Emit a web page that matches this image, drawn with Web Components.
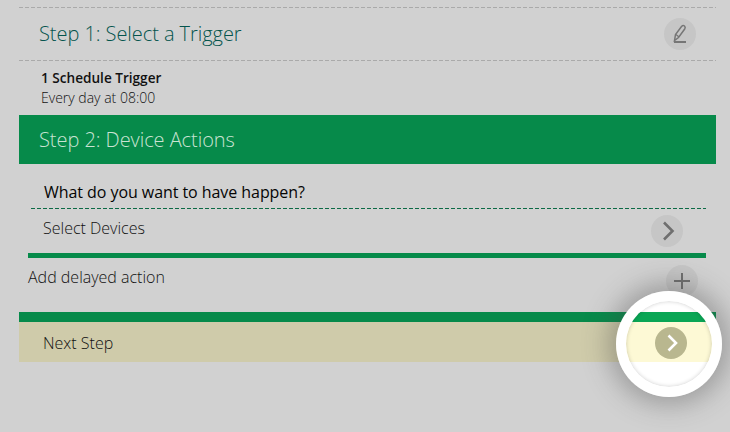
<!DOCTYPE html>
<html>
<head>
<meta charset="utf-8">
<style>
  html, body { margin: 0; height: 100%; background: #d1d1d1; overflow: hidden; }
  body { font-family: "Open Sans", "Liberation Sans", sans-serif; color: #1c1c1c; }
</style>
</head>
<body>
<wizard-page>
  <step-header dashed title-text="Step 1: Select a Trigger">
    <round-icon kind="pencil"></round-icon>
  </step-header>
  <trigger-summary name="1 Schedule Trigger" detail="Every day at 08:00"></trigger-summary>
  <step-header active title-text="Step 2: Device Actions"></step-header>
  <action-panel></action-panel>
  <next-step></next-step>
  <spot-light></spot-light>
</wizard-page>

<script>
const ICONS = {
  pencil: `<svg width="32" height="32" viewBox="0 0 32 32" fill="none" stroke="#767676">
      <path d="M10.5 22.5 L11.5 16.5 L17.5 8.5 Q19 7 20.5 8 Q21.8 9.2 20.7 11 L14.5 19.5 Z" stroke-width="1.5"/>
      <path d="M12 16.5 L15 19" stroke-width="1.2"/>
      <path d="M10 24 H22" stroke-width="2"/>
    </svg>`,
  chevron: `<svg width="32" height="32" viewBox="0 0 32 32" fill="none" stroke="#6f6f6f" stroke-width="2.6">
      <path d="M13 7.5 L21.5 16 L13 24.5"/>
    </svg>`,
  plus: `<svg width="32" height="32" viewBox="0 0 32 32" fill="none" stroke="#6f6f6f" stroke-width="2">
      <path d="M16 8 V24 M8 16 H24"/>
    </svg>`,
  next: `<svg width="32" height="32" viewBox="0 0 32 32" fill="none" stroke="#fff" stroke-width="2.6">
      <path d="M13.5 8.5 L21 16 L13.5 23.5"/>
    </svg>`
};

class RoundIcon extends HTMLElement {
  constructor() {
    super();
    this.attachShadow({ mode: 'open' });
  }
  connectedCallback() {
    const kind = this.getAttribute('kind');
    this.shadowRoot.innerHTML = `
      <style>
        :host {
          display: block;
          width: 32px;
          height: 32px;
          border-radius: 50%;
          background: var(--icon-bg, #c6c6c6);
          flex: none;
        }
        svg { display: block; }
      </style>
      ${ICONS[kind]}
    `;
  }
}
customElements.define('round-icon', RoundIcon);

class WizardPage extends HTMLElement {
  constructor() {
    super();
    this.attachShadow({ mode: 'open' });
    this.shadowRoot.innerHTML = `
      <style>
        :host {
          display: block;
          position: relative;
          width: 697px;
          height: 432px;
          margin-left: 19px;
          padding-top: 7px;
          box-sizing: border-box;
        }
      </style>
      <slot></slot>
    `;
  }
}
customElements.define('wizard-page', WizardPage);

class StepHeader extends HTMLElement {
  constructor() {
    super();
    this.attachShadow({ mode: 'open' });
  }
  connectedCallback() {
    this.shadowRoot.innerHTML = `
      <style>
        :host {
          display: flex;
          align-items: center;
          justify-content: space-between;
          height: 49px;
          padding: 0 20px;
          color: #04544d;
          font-size: 20px;
          font-weight: 300;
          letter-spacing: -0.06px;
        }
        :host([dashed]) {
          height: 52px;
          border-top: 1px solid transparent;
          border-bottom: 1px solid transparent;
          background:
            repeating-linear-gradient(90deg, #aaa 0 4px, transparent 4px 6px) top / 100% 1px no-repeat border-box,
            repeating-linear-gradient(90deg, #aaa 0 4px, transparent 4px 6px) bottom / 100% 1px no-repeat border-box;
        }
        :host([dashed]) span { position: relative; top: -1px; }
        :host([active]) {
          background: #068a4a;
          color: #c9e3d3;
        }
      </style>
      <span>${this.getAttribute('title-text')}</span>
      <slot></slot>
    `;
  }
}
customElements.define('step-header', StepHeader);

class TriggerSummary extends HTMLElement {
  constructor() {
    super();
    this.attachShadow({ mode: 'open' });
  }
  connectedCallback() {
    this.shadowRoot.innerHTML = `
      <style>
        :host {
          display: block;
          height: 54px;
          padding: 7px 0 0 22px;
          box-sizing: border-box;
          font-size: 14px;
          line-height: 20px;
        }
        b { display: block; font-weight: 600; font-size: 13.6px; color: #111; }
        span { display: block; font-size: 14px; font-weight: 300; color: #111; }
      </style>
      <b>${this.getAttribute('name')}</b>
      <span>${this.getAttribute('detail')}</span>
    `;
  }
}
customElements.define('trigger-summary', TriggerSummary);

class ActionPanel extends HTMLElement {
  constructor() {
    super();
    this.attachShadow({ mode: 'open' });
    this.shadowRoot.innerHTML = `
      <style>
        :host {
          display: block;
          height: 148px;
          padding: 0 10px 0 9px;
        }
        h3 {
          margin: 0 0 0 16px;
          padding-top: 16px;
          height: 28px;
          font-size: 16px;
          line-height: 24px;
          font-weight: 500;
          letter-spacing: -0.06px;
          color: #050505;
        }
        .dash {
          height: 1px;
          margin-left: 3px;
          background: repeating-linear-gradient(90deg, #0c6a45 0 4px, transparent 4px 6px);
        }
        .device {
          display: flex;
          align-items: center;
          justify-content: space-between;
          margin-left: 3px;
          height: 44px;
          padding: 0 23px 0 12px;
          font-size: 16px;
          font-weight: 300;
          color: #111;
        }
        .device span { position: relative; top: -3px; }
        .device round-icon { position: relative; top: 0; }
        .rule { height: 5px; background: #068a4a; }
        .delay {
          display: flex;
          justify-content: space-between;
          height: 54px;
          font-size: 16px;
          font-weight: 300;
          color: #111;
          line-height: 38px;
        }
        .delay round-icon { position: relative; top: 7px; margin-right: 8px; }
      </style>
      <h3>What do you want to have happen?</h3>
      <div class="dash"></div>
      <div class="device"><span>Select Devices</span><round-icon kind="chevron"></round-icon></div>
      <div class="rule"></div>
      <div class="delay"><span>Add delayed action</span><round-icon kind="plus"></round-icon></div>
    `;
  }
}
customElements.define('action-panel', ActionPanel);

class NextStep extends HTMLElement {
  constructor() {
    super();
    this.attachShadow({ mode: 'open' });
    this.shadowRoot.innerHTML = `
      <style>
        :host {
          display: block;
          border-top: 10px solid #068a4a;
          height: 40px;
          padding-left: 24px;
          background: #cfcbaa;
          font-size: 16px;
          font-weight: 300;
          color: #111;
          line-height: 42px;
        }
      </style>
      Next Step
    `;
  }
}
customElements.define('next-step', NextStep);

// white ring highlighting the next button, sits over the page
class SpotLight extends HTMLElement {
  constructor() {
    super();
    this.attachShadow({ mode: 'open' });
    this.shadowRoot.innerHTML = `
      <style>
        :host {
          display: block;
          position: absolute;
          left: 597px;
          top: 291px;
          width: 106px;
          height: 106px;
          border-radius: 50%;
          box-shadow: 0 0 26px 8px rgba(70,70,70,.38);
          --icon-bg: #b9b78f;
        }
        .ring {
          box-sizing: border-box;
          width: 106px;
          height: 106px;
          padding: 10px;
          border-radius: 50%;
          background: #fff;
        }
        .hole {
          position: relative;
          height: 86px;
          border-radius: 50%;
          overflow: hidden;
          background: #fff;
          display: flex;
          flex-direction: column;
        }
        .top { height: 11px; flex: none; }
        .green { height: 10px; flex: none; background: #0aa655; }
        .yellow {
          box-sizing: border-box;
          height: 40px;
          flex: none;
          background: #fdf9d5;
          display: flex;
          align-items: center;
          justify-content: center;
          padding: 2px 0 0 4px;
        }
        .hole::after {
          content: '';
          position: absolute;
          inset: 0;
          border-radius: 50%;
          box-shadow: inset 0 0 4px rgba(0,0,0,.2);
        }
      </style>
      <div class="ring">
        <div class="hole">
          <div class="top"></div>
          <div class="green"></div>
          <div class="yellow"><round-icon kind="next"></round-icon></div>
        </div>
      </div>
    `;
  }
}
customElements.define('spot-light', SpotLight);
</script>
</body>
</html>
